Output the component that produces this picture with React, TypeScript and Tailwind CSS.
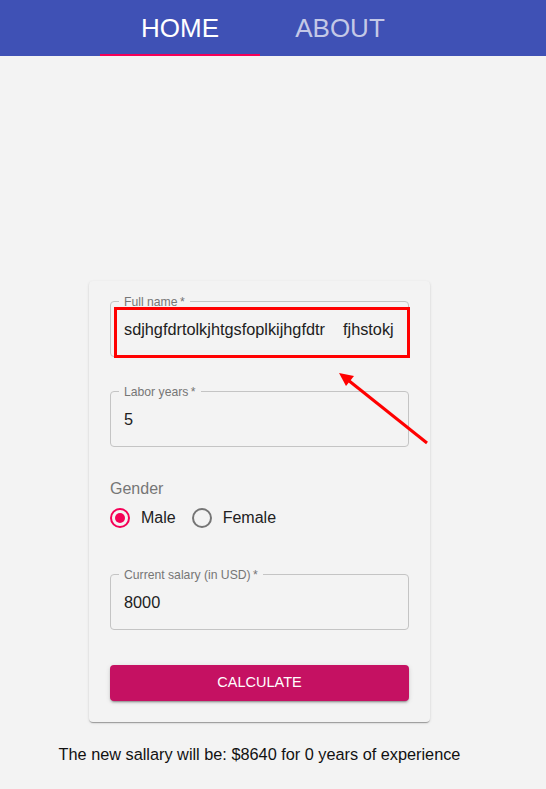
import React from 'react';

const Field = ({ label, value }: { label: string; value: string }) => (
  <div className="relative h-14 rounded border border-[#c4c4c4]">
    <span className="absolute -top-[8px] left-[8px] bg-[#f3f3f3] px-[5px] text-[12.2px] leading-4 text-[#767676]">
      {label}
    </span>
    <div className="flex h-full items-center whitespace-pre px-[13px] text-[16.3px] text-[#212121]">{value}</div>
  </div>
);

const Radio = ({ checked, label }: { checked?: boolean; label: string }) => (
  <label className="flex items-center">
    <span
      className={`flex h-5 w-5 items-center justify-center rounded-full border-2 ${
        checked ? 'border-[#f50057]' : 'border-[#757575]'
      }`}
    >
      {checked && <span className="h-2.5 w-2.5 rounded-full bg-[#f50057]" />}
    </span>
    <span className="ml-[11px] text-base text-[#212121]">{label}</span>
  </label>
);

export default function App() {
  return (
    <div
      className="relative min-h-screen w-[546px] bg-[#f3f3f3]"
      style={{ fontFamily: '"Liberation Sans", Arial, Helvetica, sans-serif' }}
    >
      <header className="flex h-14 bg-[#3f51b5] pl-[100px]">
        <div className="relative flex w-[160px] items-center justify-center text-[26px] text-white">
          HOME
          <span className="absolute bottom-0 left-0 h-0.5 w-full bg-[#f50057]" />
        </div>
        <div className="flex w-[160px] items-center justify-center text-[26px] text-white/70">ABOUT</div>
      </header>

      <main className="flex w-[519px] flex-col items-center">
        <div className="mt-[225px] w-[341px] rounded bg-[#f3f3f3] px-[21px] pb-[21px] pt-[20px] shadow-[0_2px_1px_-1px_rgba(0,0,0,0.2),0_1px_1px_0_rgba(0,0,0,0.14),0_1px_3px_0_rgba(0,0,0,0.12)]">
          <div className="relative">
            <Field label={'Full name\u2009*'} value="sdjhgfdrtolkjhtgsfoplkijhgfdtr    fjhstokj" />
            <div className="absolute left-[4px] top-[6px] h-[51px] w-[296px] border-[3px] border-[#ff0000]" />
          </div>
          <div className="mt-[34px]">
            <Field label={'Labor years\u2009*'} value="5" />
          </div>
          <div className="mt-[32px] text-base leading-5 text-[#767676]">Gender</div>
          <div className="mt-[2px] flex h-[34px] items-center gap-4">
            <Radio checked label="Male" />
            <Radio label="Female" />
          </div>
          <div className="mt-[39px]">
            <Field label={'Current salary (in USD)\u2009*'} value="8000" />
          </div>
          <button className="mt-[35px] flex h-[36px] w-full items-center justify-center rounded bg-[#c51162] text-[14.5px] text-white shadow-[0_3px_1px_-2px_rgba(0,0,0,0.2),0_2px_2px_0_rgba(0,0,0,0.14),0_1px_5px_0_rgba(0,0,0,0.12)]">
            CALCULATE
          </button>
        </div>
        <p className="mt-[20px] text-[16.3px] leading-6 text-[#111]">
          The new sallary will be: $8640 for 0 years of experience
        </p>
      </main>

      <svg className="absolute left-0 top-0" width="546" height="789" viewBox="0 0 546 789">
        <line x1="427" y1="443" x2="348" y2="380" stroke="#ff0000" strokeWidth="3" />
        <polygon points="339,373 354,376 346,386" fill="#ff0000" />
      </svg>
    </div>
  );
}
